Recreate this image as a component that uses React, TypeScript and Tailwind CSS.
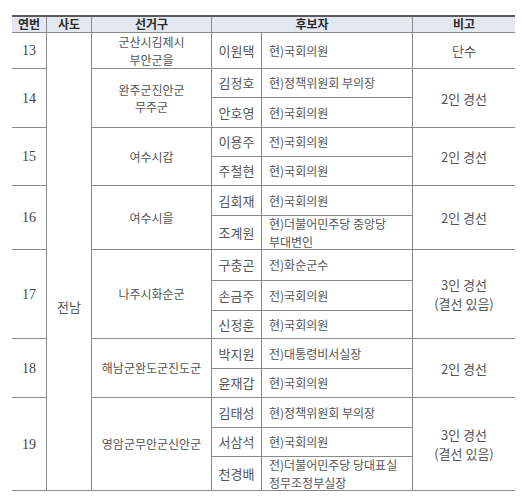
type Candidate = { name: string; desc: string[]; h: string };

type Group = {
  no: number;
  h: string;
  district: string[];
  note: string[];
  cands: Candidate[];
};

const groups: Group[] = [
  {
    no: 13,
    h: "h-[36px]",
    district: ["군산시김제시", "부안군을"],
    note: ["단수"],
    cands: [{ name: "이원택", desc: ["현)국회의원"], h: "h-[36px]" }],
  },
  {
    no: 14,
    h: "h-[59px]",
    district: ["완주군진안군", "무주군"],
    note: ["2인 경선"],
    cands: [
      { name: "김정호", desc: ["현)정책위원회 부의장"], h: "h-[29px]" },
      { name: "안호영", desc: ["현)국회의원"], h: "h-[30px]" },
    ],
  },
  {
    no: 15,
    h: "h-[58px]",
    district: ["여수시갑"],
    note: ["2인 경선"],
    cands: [
      { name: "이용주", desc: ["전)국회의원"], h: "h-[29px]" },
      { name: "주철현", desc: ["현)국회의원"], h: "h-[29px]" },
    ],
  },
  {
    no: 16,
    h: "h-[64px]",
    district: ["여수시을"],
    note: ["2인 경선"],
    cands: [
      { name: "김회재", desc: ["현)국회의원"], h: "h-[30px]" },
      { name: "조계원", desc: ["현)더불어민주당 중앙당", "부대변인"], h: "h-[34px]" },
    ],
  },
  {
    no: 17,
    h: "h-[89px]",
    district: ["나주시화순군"],
    note: ["3인 경선", "(결선 있음)"],
    cands: [
      { name: "구충곤", desc: ["전)화순군수"], h: "h-[31px]" },
      { name: "손금주", desc: ["전)국회의원"], h: "h-[30px]" },
      { name: "신정훈", desc: ["현)국회의원"], h: "h-[28px]" },
    ],
  },
  {
    no: 18,
    h: "h-[59px]",
    district: ["해남군완도군진도군"],
    note: ["2인 경선"],
    cands: [
      { name: "박지원", desc: ["전)대통령비서실장"], h: "h-[30px]" },
      { name: "윤재갑", desc: ["현)국회의원"], h: "h-[29px]" },
    ],
  },
  {
    no: 19,
    h: "h-[93px]",
    district: ["영암군무안군신안군"],
    note: ["3인 경선", "(결선 있음)"],
    cands: [
      { name: "김태성", desc: ["현)정책위원회 부의장"], h: "h-[30px]" },
      { name: "서삼석", desc: ["현)국회의원"], h: "h-[29px]" },
      { name: "천경배", desc: ["전)더불어민주당 당대표실", "정무조정부실장"], h: "h-[34px]" },
    ],
  },
];

const line = "border-[#8a8a8a]";

function Lines({ items, leading }: { items: string[]; leading: string }) {
  return (
    <div className={`text-center ${leading}`}>
      {items.map((t, i) => (
        <div key={i} className="whitespace-pre">
          {t}
        </div>
      ))}
    </div>
  );
}

export default function App() {
  return (
    <div className="min-h-[503px] w-[522px] bg-white pl-[12px] pt-[15px] font-['Noto_Sans_CJK_KR',sans-serif] text-[13px] text-[#555]">
      <div className="w-[503px] border-t-2 border-[#5a5a5a]">
        {/* Header */}
        <div className="flex h-[16px] bg-[#e3e8f0] text-[12px] font-bold leading-[15px] text-[#2a2a2a]">
          <div className={`flex w-[35px] items-center justify-center border-b border-r ${line}`}>
            <span className="-translate-y-[1px]">연번</span>
          </div>
          <div className={`flex w-[45px] items-center justify-center border-b border-r ${line}`}>
            <span className="-translate-y-[1px]">사도</span>
          </div>
          <div className={`flex w-[120px] items-center justify-center border-b border-r ${line}`}>
            <span className="-translate-y-[1px]">선거구</span>
          </div>
          <div className={`flex w-[201px] items-center justify-center border-b border-r ${line}`}>
            <span className="-translate-y-[1px]">후보자</span>
          </div>
          <div className={`flex w-[102px] items-center justify-center border-b ${line}`}>
            <span className="-translate-y-[1px]">비고</span>
          </div>
        </div>

        {/* Body */}
        <div className="flex">
          <div className="w-[35px]">
            {groups.map((g) => (
              <div
                key={g.no}
                className={`flex ${g.h} items-center justify-center border-b border-r ${line} font-['Liberation_Serif',serif] text-[14px] text-[#444]`}
              >
                {g.no}
              </div>
            ))}
          </div>

          <div className={`flex w-[45px] justify-center border-b border-r ${line} pt-[264px] leading-[19px]`}>
            전남
          </div>

          <div className="w-[423px]">
            {groups.map((g) => (
              <div key={g.no} className={`flex ${g.h}`}>
                <div className={`flex w-[120px] items-center justify-center border-b border-r ${line} text-[12px]`}>
                  <Lines items={g.district} leading="leading-[17.5px]" />
                </div>
                <div className="w-[201px]">
                  {g.cands.map((c) => (
                    <div key={c.name} className={`flex ${c.h}`}>
                      <div className={`flex w-[50px] items-center justify-center border-b border-r ${line}`}>
                        {c.name}
                      </div>
                      <div
                        className={`flex w-[151px] flex-col justify-center border-b border-r ${line} pl-[7px] text-[12px] leading-[17.5px]`}
                      >
                        {c.desc.map((d, i) => (
                          <div key={i} className="whitespace-pre">
                            {d}
                          </div>
                        ))}
                      </div>
                    </div>
                  ))}
                </div>
                <div className={`flex w-[102px] items-center justify-center border-b ${line}`}>
                  <Lines items={g.note} leading="leading-[19px]" />
                </div>
              </div>
            ))}
          </div>
        </div>
      </div>
    </div>
  );
}
